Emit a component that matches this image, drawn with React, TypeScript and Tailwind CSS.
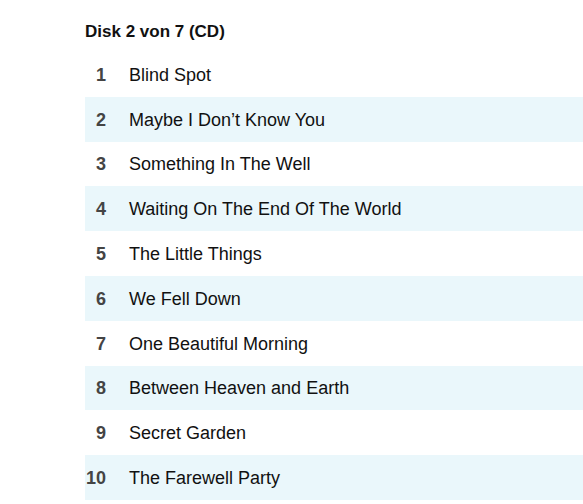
const tracks = [
  "Blind Spot",
  "Maybe I Don’t Know You",
  "Something In The Well",
  "Waiting On The End Of The World",
  "The Little Things",
  "We Fell Down",
  "One Beautiful Morning",
  "Between Heaven and Earth",
  "Secret Garden",
  "The Farewell Party",
];

export default function App() {
  return (
    <div className="min-h-screen bg-white pl-[85px] font-['Liberation_Sans',Arial,sans-serif]">
      {/* Header */}
      <h2 className="pt-[22px] pb-[10px] text-[17px] font-bold leading-[20px] text-[#111]">
        Disk 2 von 7 (CD)
      </h2>

      {/* Tracks */}
      <ol>
        {tracks.map((title, i) => (
          <li
            key={title}
            className={`flex h-[44.8px] items-center pt-[2px] ${
              i % 2 === 1 ? "bg-[#eaf7fb]" : "bg-white"
            }`}
          >
            <span className="w-[21px] text-right text-[18px] font-bold text-[#444]">
              {i + 1}
            </span>
            <span className="ml-[23px] text-[18px] text-[#111]">{title}</span>
          </li>
        ))}
      </ol>
    </div>
  );
}
